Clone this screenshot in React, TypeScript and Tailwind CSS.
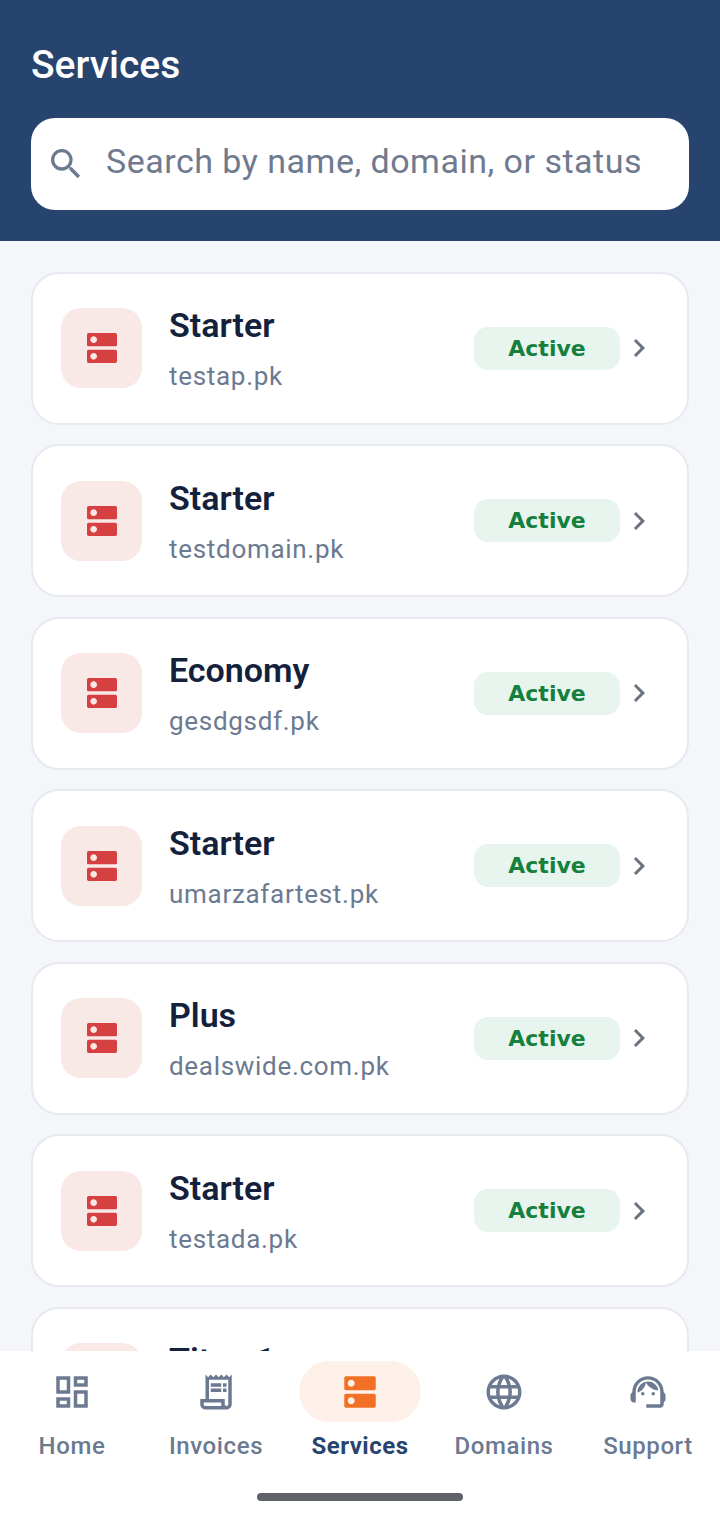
import { MdChevronRight, MdDns, MdLanguage, MdOutlineDashboard, MdOutlineReceiptLong, MdOutlineSupportAgent, MdSearch } from 'react-icons/md';

const services = [
  { plan: 'Starter', domain: 'testap.pk' },
  { plan: 'Starter', domain: 'testdomain.pk' },
  { plan: 'Economy', domain: 'gesdgsdf.pk' },
  { plan: 'Starter', domain: 'umarzafartest.pk' },
  { plan: 'Plus', domain: 'dealswide.com.pk' },
  { plan: 'Starter', domain: 'testada.pk' },
  { plan: 'Titan 1', domain: 'titan.pk' },
];

const tabs = [
  { label: 'Home', icon: MdOutlineDashboard },
  { label: 'Invoices', icon: MdOutlineReceiptLong },
  { label: 'Services', icon: MdDns, active: true },
  { label: 'Domains', icon: MdLanguage },
  { label: 'Support', icon: MdOutlineSupportAgent },
];

function ServiceCard({ plan, domain }: { plan: string; domain: string }) {
  return (
    <div className="flex h-[153px] shrink-0 items-center rounded-[28px] border-2 border-[#e6e9f0] bg-white pl-[28px] pr-[30px]">
      <div className="flex h-[80px] w-[81px] shrink-0 items-center justify-center rounded-[20px] bg-[#f8e9e7]">
        <MdDns className="h-[40px] w-[40px] text-[#d64040]" />
      </div>
      <div className="ml-[27px] min-w-0 flex-1">
        <p className="text-[34px] leading-[44px] font-semibold text-[#14213d]">{plan}</p>
        <p className="mt-[12px] text-[26px] leading-[34px] tracking-[0.7px] text-[#6b7a90]">{domain}</p>
      </div>
      <span className="flex h-[43px] w-[146px] items-center justify-center rounded-[14px] bg-[#e8f5ee] font-['DejaVu_Sans',sans-serif] text-[22px] font-bold text-[#15803d]">
        Active
      </span>
      <MdChevronRight className="ml-[1px] h-[36px] w-[36px] shrink-0 text-[#6b7280]" />
    </div>
  );
}

export default function App() {
  return (
    <div className="flex h-[1520px] w-[720px] flex-col overflow-hidden bg-[#f4f6fa] font-['Roboto',sans-serif]">
      {/* Header */}
      <header className="h-[241px] shrink-0 bg-[#27446f] px-[31px] pt-[41px]">
        <h1 className="text-[39px] leading-[48px] font-medium text-white">Services</h1>
        <div className="mt-[29px] flex h-[92px] items-center rounded-[24px] bg-white pl-[15px]">
          <MdSearch className="h-[40px] w-[40px] shrink-0 text-[#6b7a90]" />
          <span className="mb-[6px] ml-[20px] text-[34px] tracking-[0.5px] text-[#707a8f]">Search by name, domain, or status</span>
        </div>
      </header>

      {/* Service list */}
      <main className="flex min-h-0 flex-1 flex-col gap-[19.5px] overflow-hidden px-[31px] pt-[30.5px]">
        {services.map((service) => (
          <ServiceCard key={service.domain} plan={service.plan} domain={service.domain} />
        ))}
      </main>

      {/* Bottom navigation */}
      <nav className="flex h-[169px] shrink-0 flex-col items-center bg-white pt-[10px]">
        <div className="grid w-full grid-cols-5">
          {tabs.map((tab) => {
            const Icon = tab.icon;
            return (
              <div key={tab.label} className="flex flex-col items-center">
                <div className={`flex h-[61px] w-[122px] items-center justify-center rounded-full ${tab.active ? 'bg-[#fdf0e8]' : ''}`}>
                  <Icon className={`h-[42px] w-[42px] ${tab.active ? 'text-[#f26f26]' : 'text-[#6b7a90]'}`} />
                </div>
                <span className={`mt-[7px] text-[24px] leading-[34px] ${tab.active ? 'font-bold tracking-[0.5px] text-[#27446f]' : 'font-medium tracking-[0.6px] text-[#6b7a90]'}`}>
                  {tab.label}
                </span>
              </div>
            );
          })}
        </div>
        <div className="mt-[30px] h-[8px] w-[206px] rounded-full bg-[#5f6368]" />
      </nav>
    </div>
  );
}
